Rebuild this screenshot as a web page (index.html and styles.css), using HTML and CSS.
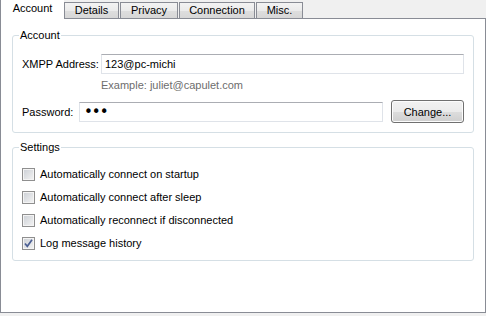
FILE: index.html
```html
<!DOCTYPE html>
<html lang="en">
<head>
    <meta charset="UTF-8">
    <title>Account settings</title>
    <link rel="stylesheet" href="styles.css">
</head>
<body>
    <div class="tabs">
        <div class="tab active">Account</div>
        <div class="tab tab-details">Details</div>
        <div class="tab tab-privacy">Privacy</div>
        <div class="tab tab-connection">Connection</div>
        <div class="tab tab-misc">Misc.</div>
    </div>

    <div class="panel">
        <fieldset class="group account">
            <legend>Account</legend>
            <div class="row">
                <label class="label label-jid" for="jid">XMPP Address:</label>
                <input class="field field-jid" id="jid" type="text" value="123@pc-michi">
            </div>
            <div class="hint">Example: juliet@capulet.com</div>
            <div class="row row-password">
                <label class="label label-password" for="password">Password:</label>
                <input class="field field-password" id="password" type="password" value="abc">
                <button class="btn">Change...</button>
            </div>
        </fieldset>

        <fieldset class="group settings">
            <legend>Settings</legend>
            <div class="check"><span class="box"></span>Automatically connect on startup</div>
            <div class="check"><span class="box"></span>Automatically connect after sleep</div>
            <div class="check"><span class="box"></span>Automatically reconnect if disconnected</div>
            <div class="check">
                <span class="box">
                    <svg width="11" height="11" viewBox="0 0 11 11"><path d="M2 5.5 L4.3 8.3 L9 1.8" fill="none" stroke="#4b5f93" stroke-width="1.7"/></svg>
                </span>Log message history
            </div>
        </fieldset>
    </div>
</body>
</html>
```

FILE: styles.css
```css
body {
    margin: 0;
    width: 486px;
    height: 316px;
    overflow: hidden;
    background: #f0f0f0;
    font-family: "Liberation Sans", Arial, sans-serif;
    font-size: 11px;
    color: #000;
}

/* tab strip */
.tabs {
    display: flex;
    align-items: flex-end;
    height: 18px;
}
.tab {
    box-sizing: border-box;
    height: 16px;
    line-height: 15px;
    text-align: center;
    border: 1px solid #898c95;
    border-bottom: none;
    background: linear-gradient(#f3f3f3, #ebebeb 50%, #dedede 51%, #d7d7d7);
    margin-left: 1px;
}
.tab.active {
    position: relative;
    z-index: 1;
    width: 64px;
    height: 19px;
    line-height: 17px;
    margin: 0 0 -1px 0;
    border-top: none;
    border-right: none;
    background: #fff;
}
.tab-details { width: 55px; margin-left: 0; }
.tab-privacy { width: 58px; }
.tab-connection { width: 76px; }
.tab-misc { width: 47px; }

.panel {
    box-sizing: border-box;
    width: 486px;
    height: 295px;
    border: 1px solid #898c95;
    background: #fff;
    padding-top: 10px;
}

/* group boxes */
.group {
    margin: 0 11px;
    padding: 12px 9px 9px;
    border: 1px solid #d5dfe5;
    border-radius: 3px;
    min-width: 0;
}
.group legend {
    padding: 0 1px;
    margin-left: -3px;
    line-height: 13px;
}
.settings {
    margin-top: 8px;
    padding-top: 14px;
    padding-bottom: 10px;
}

.row {
    display: flex;
    align-items: center;
}
.label-jid { width: 79px; }
.label-password { width: 57px; }

.field {
    box-sizing: border-box;
    height: 20px;
    margin: 0;
    padding: 0 3px;
    border: 1px solid #dfe3e9;
    border-top-color: #abadb3;
    font-family: inherit;
    font-size: 11px;
    color: #000;
    outline: none;
}
.field-jid { width: 363px; }
.field-password {
    width: 304px;
    padding-left: 4px;
    font-family: "DejaVu Sans", sans-serif;
    font-size: 15px;
    letter-spacing: -1px;
}

.hint {
    margin: 5px 0 0 79px;
    line-height: 13px;
    color: #6d6d6d;
}
.row-password { margin-top: 8px; }

.btn {
    box-sizing: border-box;
    width: 73px;
    height: 23px;
    margin-left: 8px;
    padding: 0;
    border: 1px solid #707070;
    border-radius: 3px;
    background: linear-gradient(#f2f2f2, #ebebeb 50%, #dddddd 51%, #cfcfcf);
    box-shadow: inset 0 0 0 1px #fcfcfc;
    font-family: inherit;
    font-size: 11px;
    color: #000;
}

/* checkboxes */
.check {
    display: flex;
    align-items: center;
    height: 13px;
    line-height: 13px;
}
.check + .check { margin-top: 10px; }
.box {
    box-sizing: border-box;
    width: 13px;
    height: 13px;
    margin-right: 5px;
    border: 1px solid #8f8f8f;
    background: linear-gradient(135deg, #cbcfd5, #f4f4f4);
    box-shadow: inset 0 0 0 1px #f4f4f4;
    display: flex;
    align-items: center;
    justify-content: center;
}
.box svg { display: block; }
```
